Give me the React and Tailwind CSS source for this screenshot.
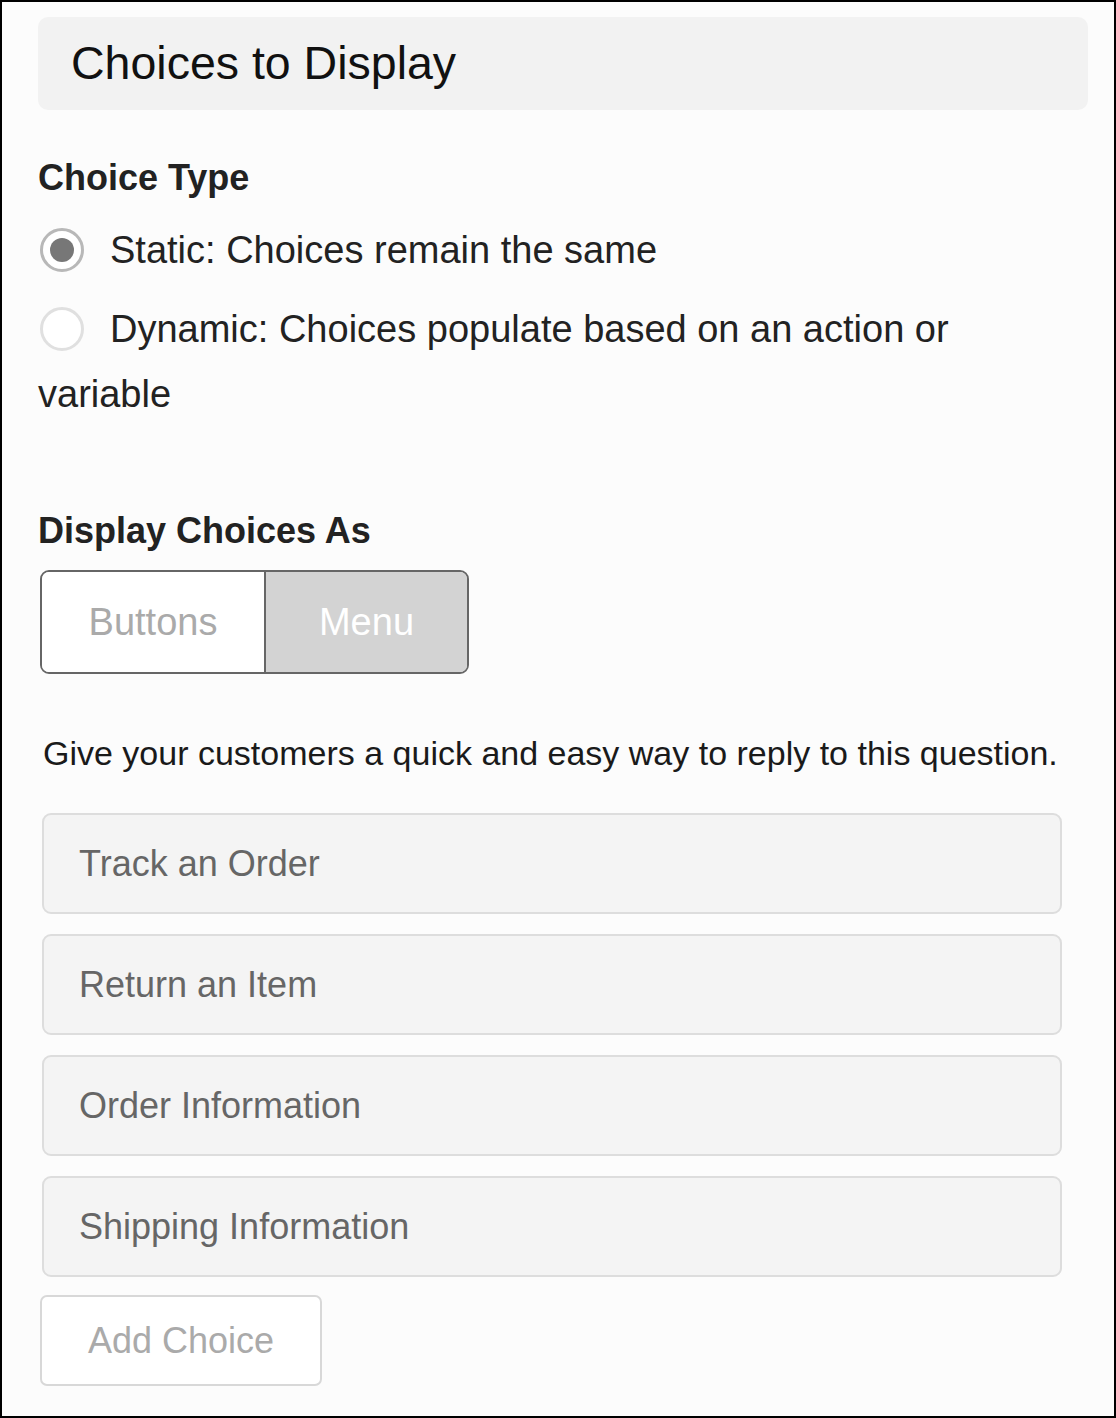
import React from 'react';

const choices = ['Track an Order', 'Return an Item', 'Order Information', 'Shipping Information'];

const Radio = ({ checked }) => (
  <span
    className={`inline-flex w-[44px] h-[44px] rounded-full items-center justify-center align-middle mr-[26px] relative -top-[3px] bg-white ${
      checked ? 'border-[3px] border-[#b8b8b8]' : 'border-[3px] border-[#e0e0e0]'
    }`}
  >
    {checked && <span className="w-[24px] h-[24px] rounded-full bg-[#777777]" />}
  </span>
);

const App = () => {
  return (
    <div
      className="w-[1116px] h-[1418px] border-2 border-black bg-[#fcfcfc] pl-[36px] pr-[26px] pt-[15px] overflow-hidden"
      style={{ fontFamily: '"Liberation Sans", Arial, sans-serif' }}
    >
      <div className="h-[93px] rounded-[10px] bg-[#f2f2f2] flex items-center pl-[33px]">
        <h1 className="text-[46.5px] text-[#111111] leading-none">Choices to Display</h1>
      </div>

      <h2 className="mt-[50px] text-[36px] font-bold text-[#222222] leading-none">Choice Type</h2>

      <div className="mt-[22px] text-[38px] text-[#222222] leading-[65px]">
        <div className="ml-[2px]">
          <Radio checked />
          Static: Choices remain the same
        </div>
        <div className="mt-[14px]">
          <span className="ml-[2px]">
            <Radio />
          </span>
          Dynamic: Choices populate based on an action or
          <br />
          variable
        </div>
      </div>

      <h2 className="mt-[86px] text-[36px] font-bold text-[#222222] leading-none">Display Choices As</h2>

      <div className="mt-[21px] ml-[2px] flex w-[429px] h-[104px] border-2 border-[#666666] rounded-[9px] overflow-hidden">
        <button className="w-[224px] bg-white text-[38px] text-[#aaaaaa] border-r-2 border-[#666666]">Buttons</button>
        <button className="flex-1 bg-[#d3d3d3] text-[38px] text-white">Menu</button>
      </div>

      <p className="mt-[62px] ml-[5px] text-[34px] text-[#1a1a1a] leading-none">
        Give your customers a quick and easy way to reply to this question.
      </p>

      <div className="mt-[43px] ml-[4px] w-[1020px] flex flex-col gap-[20px]">
        {choices.map((c) => (
          <div
            key={c}
            className="h-[101px] rounded-[9px] border-2 border-[#dddddd] bg-[#f4f4f4] flex items-center pl-[35px] text-[36px] text-[#666666]"
          >
            {c}
          </div>
        ))}
      </div>

      <button className="mt-[18px] ml-[2px] w-[282px] h-[91px] rounded-[7px] border-2 border-[#d8d8d8] bg-white text-[36px] text-[#aaaaaa]">
        Add Choice
      </button>
    </div>
  );
};

export default App;
